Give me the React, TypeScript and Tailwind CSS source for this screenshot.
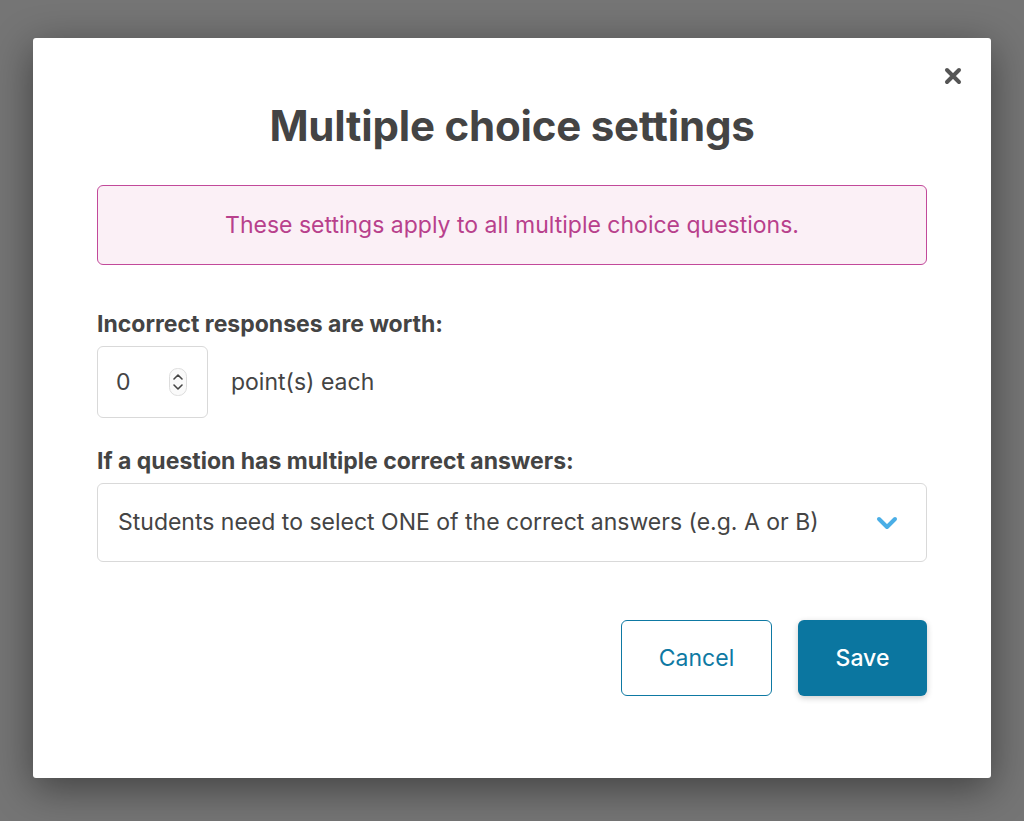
export default function App() {
	return (
		<div className="flex min-h-[821px] w-full items-start justify-center bg-[#757575] pt-[38px] font-['Inter','Liberation_Sans',sans-serif] text-[#444444]">
			<div className="relative flex w-[958px] h-[740px] flex-col rounded-[3px] bg-white px-16 pt-[98px] shadow-[0_10px_40px_rgba(0,0,0,0.45)]">
				<button className="absolute right-[28px] top-[28px] flex h-[20px] w-[20px] items-center justify-center text-[#555555]">
					<svg width="18" height="18" viewBox="0 0 18 18">
						<path d="M3 3 L15 15 M15 3 L3 15" stroke="currentColor" strokeWidth="4" strokeLinecap="round" />
					</svg>
				</button>
				<h1 className="text-center text-[42px] font-bold leading-none -mt-[31px] tracking-[-0.2px] text-[#444444]">
					Multiple choice settings
				</h1>
				<div className="mt-[38px] flex h-[80px] items-center justify-center rounded-[6px] border border-[#c2499a] bg-[#fbf0f6] text-[23px] text-[#b8408c]">
					These settings apply to all multiple choice questions.
				</div>
				<div className="mt-[48px] text-[23px] font-bold leading-none text-[#444444]">Incorrect responses are worth:</div>
				<div className="mt-[10px] flex items-center gap-[23px]">
					<div className="flex h-[72px] w-[111px] items-center justify-between rounded-[6px] border border-[#d9d9d9] pl-[18px] pr-[20px]">
						<span className="text-[23px]">0</span>
						<svg width="18" height="28" viewBox="0 0 18 28">
							<rect x="0.5" y="0.5" width="17" height="27" rx="8" fill="#fafafa" stroke="#dddddd" />
							<path d="M5 11 L9 7 L13 11" stroke="#444" strokeWidth="1.6" fill="none" strokeLinecap="round" strokeLinejoin="round" />
							<path d="M5 17 L9 21 L13 17" stroke="#444" strokeWidth="1.6" fill="none" strokeLinecap="round" strokeLinejoin="round" />
						</svg>
					</div>
					<span className="text-[23px]">point(s) each</span>
				</div>
				<div className="mt-[32px] text-[23px] font-bold leading-none text-[#444444]">If a question has multiple correct answers:</div>
				<div className="mt-[10px] flex h-[79px] items-center justify-between rounded-[6px] border border-[#d9d9d9] pl-[20px] pr-[28px]">
					<span className="text-[23px]">Students need to select ONE of the correct answers (e.g. A or B)</span>
					<svg width="22" height="14" viewBox="0 0 22 14">
						<path d="M3 3 L11 11 L19 3" stroke="#4aaee6" strokeWidth="4" fill="none" strokeLinecap="round" strokeLinejoin="round" />
					</svg>
				</div>
				<div className="mt-[58px] flex justify-end gap-[26px]">
					<button className="flex h-[76px] w-[151px] items-center justify-center rounded-[6px] border border-[#0e79a3] bg-white text-[23px] text-[#0e79a3]">
						Cancel
					</button>
					<button className="flex h-[76px] w-[129px] items-center justify-center rounded-[6px] bg-[#0b76a0] text-[23px] font-medium text-white shadow-[0_2px_6px_rgba(0,0,0,0.2)]">
						Save
					</button>
				</div>
			</div>
		</div>
	);
}
